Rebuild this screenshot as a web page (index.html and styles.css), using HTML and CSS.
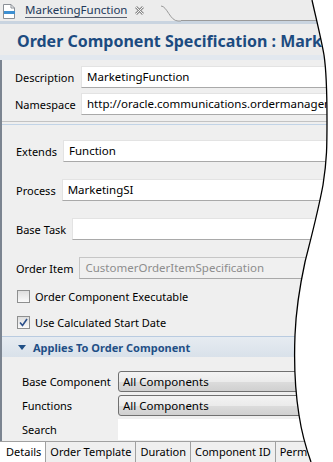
FILE: index.html
```html
<html lang="en">
<head>
    <title>MarketingFunction</title>
    <link rel="stylesheet" href="styles.css">
</head>
<body>
    <div class="editor">
        <div class="tabbar">
            <div class="tab">
                <svg class="file-icon" width="12" height="15" viewBox="0 0 12 15">
                    <path d="M0.5 0.5 H8 L11.5 4 V14.5 H0.5 Z" fill="#fff" stroke="#8a8f96"/>
                    <path d="M8 0.5 V4 H11.5" fill="none" stroke="#8a8f96"/>
                    <rect x="1" y="7" width="11" height="3" fill="#3d8fd1"/>
                </svg>
                <span class="tab-title">MarketingFunction</span>
                <svg class="tab-close" width="11" height="11" viewBox="0 0 11 11">
                    <path d="M2 2 L9 9 M9 2 L2 9" stroke="#8c8c8c" stroke-width="2.8"/>
                    <path d="M2 2 L9 9 M9 2 L2 9" stroke="#f4f4f4" stroke-width="1"/>
                </svg>
            </div>
            <svg class="tab-curve" width="20" height="22" viewBox="0 0 20 22">
                <path d="M0 6 C6 6 9 21 17 21 H20" fill="none" stroke="#9a9a9a"/>
            </svg>
            <div class="tab-rest"></div>
        </div>

        <div class="header">
            <svg class="file-icon big" width="13" height="17" viewBox="0 0 13 17">
                <path d="M0.5 0.5 H9 L12.5 4 V16.5 H0.5 Z" fill="#fff" stroke="#8a8f96"/>
                <path d="M9 0.5 V4 H12.5" fill="none" stroke="#8a8f96"/>
                <rect x="1" y="8" width="12" height="3" fill="#3d8fd1"/>
            </svg>
            <h1>Order Component Specification : MarketingFunction</h1>
        </div>

        <div class="form">
            <div class="ident">
                <label>Description</label>
                <div class="field">MarketingFunction</div>
                <label>Namespace</label>
                <div class="field">http://oracle.communications.ordermanagement</div>
            </div>

            <div class="main">
                <div class="row">
                    <label>Extends</label>
                    <div class="field">Function</div>
                </div>
                <div class="row">
                    <label>Process</label>
                    <div class="field">MarketingSI</div>
                </div>
                <div class="row">
                    <label>Base Task</label>
                    <div class="field"></div>
                </div>
                <div class="row">
                    <label>Order Item</label>
                    <div class="field disabled">CustomerOrderItemSpecification</div>
                </div>
                <div class="check">
                    <span class="box"></span>
                    <span>Order Component Executable</span>
                </div>
                <div class="check">
                    <span class="box">
                        <svg width="9" height="9" viewBox="0 0 9 9">
                            <path d="M1 4.5 L3.5 7.5 L8 1" fill="none" stroke="#2b4f8a" stroke-width="1.6"/>
                        </svg>
                    </span>
                    <span>Use Calculated Start Date</span>
                </div>
            </div>

            <div class="applies">
                <div class="applies-head">
                    <svg width="8" height="5" viewBox="0 0 8 5"><path d="M0 0 H8 L4 5 Z" fill="#1f4f86"/></svg>
                    <span>Applies To Order Component</span>
                </div>
                <div class="applies-body">
                    <label>Base Component</label>
                    <div class="combo">All Components</div>
                    <label>Functions</label>
                    <div class="combo">All Components</div>
                    <label>Search</label>
                    <div class="field search"></div>
                </div>
            </div>
        </div>

        <div class="bottom-tabs">
            <span class="btab active">Details</span>
            <span class="btab">Order Template</span>
            <span class="btab">Duration</span>
            <span class="btab">Component ID</span>
            <span class="btab">Permissions</span>
        </div>
    </div>

    <!-- torn edge of the screenshot -->
    <svg class="tear" width="333" height="462" viewBox="0 0 333 462">
        <path d="M312 0 C316 18 321 38 324 55 C327 75 327 95 327 120 C327 145 327 160 323 185 C318 212 311 238 305 262 C300 285 296 310 295 335 C294 360 295 390 299 415 C302 435 306 448 311 462 L333 462 L333 0 Z" fill="#fff"/>
        <path d="M312 0 C316 18 321 38 324 55 C327 75 327 95 327 120 C327 145 327 160 323 185 C318 212 311 238 305 262 C300 285 296 310 295 335 C294 360 295 390 299 415 C302 435 306 448 311 462" fill="none" stroke="#000" stroke-width="1.3"/>
    </svg>
</body>
</html>
```

FILE: styles.css
```css
body {
    margin: 0;
    width: 333px;
    height: 462px;
    overflow: hidden;
    font-family: "Noto Sans", "DejaVu Sans", sans-serif;
    font-size: 11px;
    color: #000;
    background: #fff;
}
.editor {
    width: 340px;
    height: 462px;
    display: flex;
    flex-direction: column;
    background: #efefef;
}

/* top tab */
.tabbar {
    height: 21px;
    display: flex;
    background: #ececec;
    border-bottom: 3px solid #c9d4e0;
}
.tab {
    display: flex;
    align-items: center;
    padding-left: 3px;
    height: 21px;
    width: 158px;
}
.tab-title {
    margin-left: 10px;
    color: #22395a;
    font-size: 11.5px;
    line-height: 14px;
    border-bottom: 1px solid #5a6270;
}
.tab-close {
    margin-left: 7px;
}
.tab-curve {
    flex: none;
    display: block;
}
.tab-rest {
    flex: 1;
    height: 21px;
    box-sizing: border-box;
    border-bottom: 1px solid #9a9a9a;
}
.tabbar .file-icon {
    margin-top: 1px;
}

/* heading */
.header {
    height: 31px;
    display: flex;
    align-items: center;
    padding-left: 10px;
    background: #ececec;
    border-bottom: 5px solid #e2e8ef;
    white-space: nowrap;
    overflow: hidden;
}
.header h1 {
    margin: 2px 0 0 7px;
    font-size: 16px;
    font-weight: bold;
    color: #1c4b80;
}

/* form */
.form {
    flex: 1;
    border-left: 2px solid #7b8490;
    display: flex;
    flex-direction: column;
}
.field {
    height: 22px;
    box-sizing: border-box;
    background: #fff;
    border: 1px solid #e3e3e3;
    border-bottom-color: #a9a9a9;
    padding-left: 5px;
    line-height: 20px;
    white-space: nowrap;
    overflow: hidden;
    flex: 1;
    font-size: 11.5px;
}
.field.disabled {
    background: #f0f0f0;
    border: 1px solid #c6c6c6;
    border-bottom-color: #a9a9a9;
    color: #8d8d8d;
}
.ident {
    display: grid;
    grid-template-columns: 66px 1fr;
    row-gap: 5px;
    align-items: center;
    padding: 6px 0 6px 13px;
    border-bottom: 1px solid #c3c3c3;
}
.main {
    margin-top: 2px;
    border-top: 1px solid #c2d4e7;
    padding: 15px 0 0 14px;
    display: flex;
    flex-direction: column;
}
.row {
    display: flex;
    align-items: center;
    margin-bottom: 17px;
}
.row label {
    margin-right: 6px;
}
.row:nth-child(4) {
    margin-bottom: 9px;
}
.check {
    display: flex;
    align-items: center;
    height: 16px;
    margin-bottom: 10px;
    padding-left: 1px;
}
.box {
    width: 11px;
    height: 11px;
    border: 1px solid #8e8f8f;
    background: linear-gradient(#dedede, #fafafa);
    margin-right: 5px;
    display: flex;
    align-items: center;
    justify-content: center;
}

/* applies to */
.applies-head {
    margin-top: -4px;
    height: 21px;
    box-sizing: border-box;
    display: flex;
    align-items: center;
    padding-left: 16px;
    border-top: 1px solid #b9cbe0;
    background: linear-gradient(#e6ebf1, #d9e1ea);
    color: #1f4f86;
    font-weight: bold;
    font-size: 11px;
}
.applies-head svg {
    margin-right: 7px;
}
.applies-body {
    display: grid;
    grid-template-columns: 96px 1fr;
    row-gap: 3px;
    align-items: center;
    padding: 14px 0 0 20px;
}
.combo {
    height: 21px;
    box-sizing: border-box;
    border: 1px solid #707070;
    border-radius: 3px;
    background: linear-gradient(#f3f3f3 0%, #ebebeb 50%, #dcdcdc 51%, #d0d0d0 100%);
    padding-left: 4px;
    line-height: 19px;
    white-space: nowrap;
    font-size: 11.5px;
}
.field.search {
    height: 21px;
    border: none;
}

/* bottom tabs */
.bottom-tabs {
    height: 21px;
    box-sizing: border-box;
    display: flex;
    border-top: 1px solid #a0a0a0;
    background: #efefef;
    white-space: nowrap;
}
.btab {
    padding: 0 4px;
    line-height: 20px;
    border-right: 1px solid #a0a0a0;
    font-size: 11px;
}
.btab.active {
    background: #fff;
    padding-left: 6px;
}

.tear {
    position: absolute;
    left: 0;
    top: 0;
}
```
